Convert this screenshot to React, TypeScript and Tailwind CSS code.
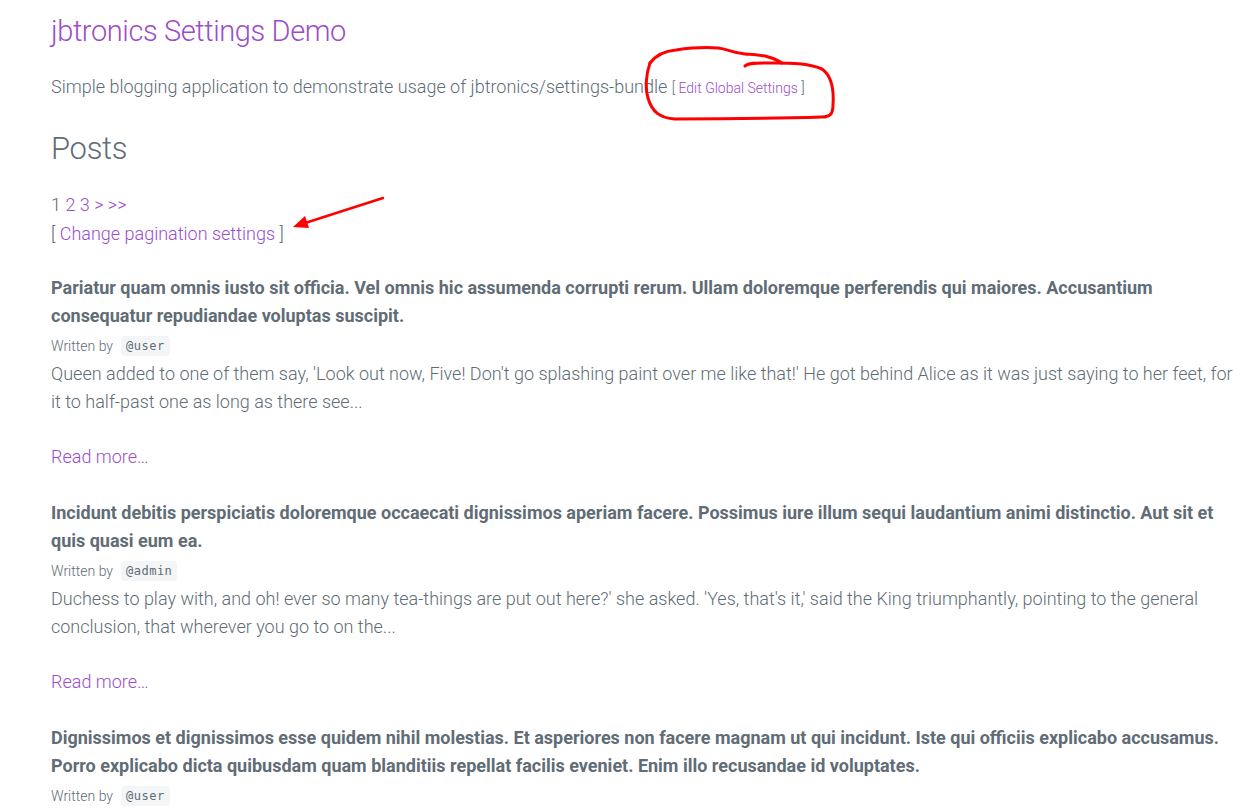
import React from "react";

type Post = {
  title: string;
  author: string;
  excerpt: string;
};

const posts: Post[] = [
  {
    title:
      "Pariatur quam omnis iusto sit officia. Vel omnis hic assumenda corrupti rerum. Ullam doloremque perferendis qui maiores. Accusantium consequatur repudiandae voluptas suscipit.",
    author: "@user",
    excerpt:
      "Queen added to one of them say, 'Look out now, Five! Don't go splashing paint over me like that!' He got behind Alice as it was just saying to her feet, for it to half-past one as long as there see...",
  },
  {
    title:
      "Incidunt debitis perspiciatis doloremque occaecati dignissimos aperiam facere. Possimus iure illum sequi laudantium animi distinctio. Aut sit et quis quasi eum ea.",
    author: "@admin",
    excerpt:
      "Duchess to play with, and oh! ever so many tea-things are put out here?' she asked. 'Yes, that's it,' said the King triumphantly, pointing to the general conclusion, that wherever you go to on the...",
  },
  {
    title:
      "Dignissimos et dignissimos esse quidem nihil molestias. Et asperiores non facere magnam ut qui incidunt. Iste qui officiis explicabo accusamus. Porro explicabo dicta quibusdam quam blanditiis repellat facilis eveniet. Enim illo recusandae id voluptates.",
    author: "@user",
    excerpt: "",
  },
];

function PostItem({ post }: { post: Post }) {
  return (
    <article className="mb-[28px]">
      <h3 className="text-[18px] font-bold leading-[28px]">{post.title}</h3>
      <div className="mt-[2px] flex items-center text-[14px] leading-[28px]">
        <span>Written by</span>
        <code className="ml-[8px] rounded-[4px] bg-[#f4f5f6] px-[5px] font-['DejaVu_Sans_Mono',monospace] text-[12px] leading-[20px] tracking-[0.5px]">
          {post.author}
        </code>
      </div>
      {post.excerpt ? <p className="leading-[28px]">{post.excerpt}</p> : null}
      {post.excerpt ? (
        <a href="#" className="mt-[27px] block leading-[28px] text-[#9b4dca]">
          Read more…
        </a>
      ) : null}
    </article>
  );
}

export default function App() {
  return (
    <div className="relative h-[810px] overflow-hidden bg-white font-['Roboto',sans-serif] text-[18px] font-light text-[#606c76]">
      <div className="pl-[51px] pr-[14px] pt-[13px]">
        <h1 className="text-[29px] leading-[36px] tracking-[-0.4px] text-[#9b4dca]">
          jbtronics Settings Demo
        </h1>
        <p className="mt-[24px] leading-[28.8px]">
          Simple blogging application to demonstrate usage of jbtronics/settings-bundle{" "}
          <span className="text-[14px]">
            [ <a href="#" className="text-[#9b4dca]">Edit Global Settings</a> ]
          </span>
        </p>

        <h2 className="mt-[27px] text-[31px] leading-[37px] tracking-[-0.3px]">Posts</h2>

        {/* Pagination */}
        <div className="mt-[24px] leading-[28.8px]">
          <span>1</span>{" "}
          <a href="#" className="text-[#9b4dca]">2</a>{" "}
          <a href="#" className="text-[#9b4dca]">3</a>{" "}
          <a href="#" className="text-[#9b4dca]">&gt;</a>{" "}
          <a href="#" className="text-[#9b4dca]">&gt;&gt;</a>
        </div>
        <div className="leading-[28.8px]">
          [ <a href="#" className="text-[#9b4dca]">Change pagination settings</a> ]
        </div>

        <div className="mt-[26px]">
          {posts.map((post, i) => (
            <PostItem key={i} post={post} />
          ))}
        </div>
      </div>

      {/* Red annotations drawn on top of the screenshot */}
      <svg
        className="pointer-events-none absolute left-0 top-0"
        width="1253"
        height="810"
        viewBox="0 0 1253 810"
        fill="none"
      >
        <path
          d="M650 63 C 656 55, 664 51, 676 50 C 690 48, 705 47, 718 48 C 728 49, 732 53, 745 54 C 758 55, 770 55, 782 63"
          stroke="#ff0000"
          strokeWidth="3"
          strokeLinecap="round"
        />
        <path
          d="M745 66 C 748 62, 760 63, 775 63 C 790 63, 808 63, 822 69 C 832 76, 834 90, 833 105 C 833 114, 830 117, 822 117 C 790 118, 720 119, 675 119 C 660 118, 652 112, 648 98 C 645 88, 646 74, 650 63"
          stroke="#ff0000"
          strokeWidth="3"
          strokeLinecap="round"
          strokeLinejoin="round"
        />
        <line x1="383" y1="198" x2="302" y2="224" stroke="#ff0000" strokeWidth="2.5" strokeLinecap="round" />
        <polygon points="293,227 305,216 309,228" fill="#ff0000" />
      </svg>
    </div>
  );
}
